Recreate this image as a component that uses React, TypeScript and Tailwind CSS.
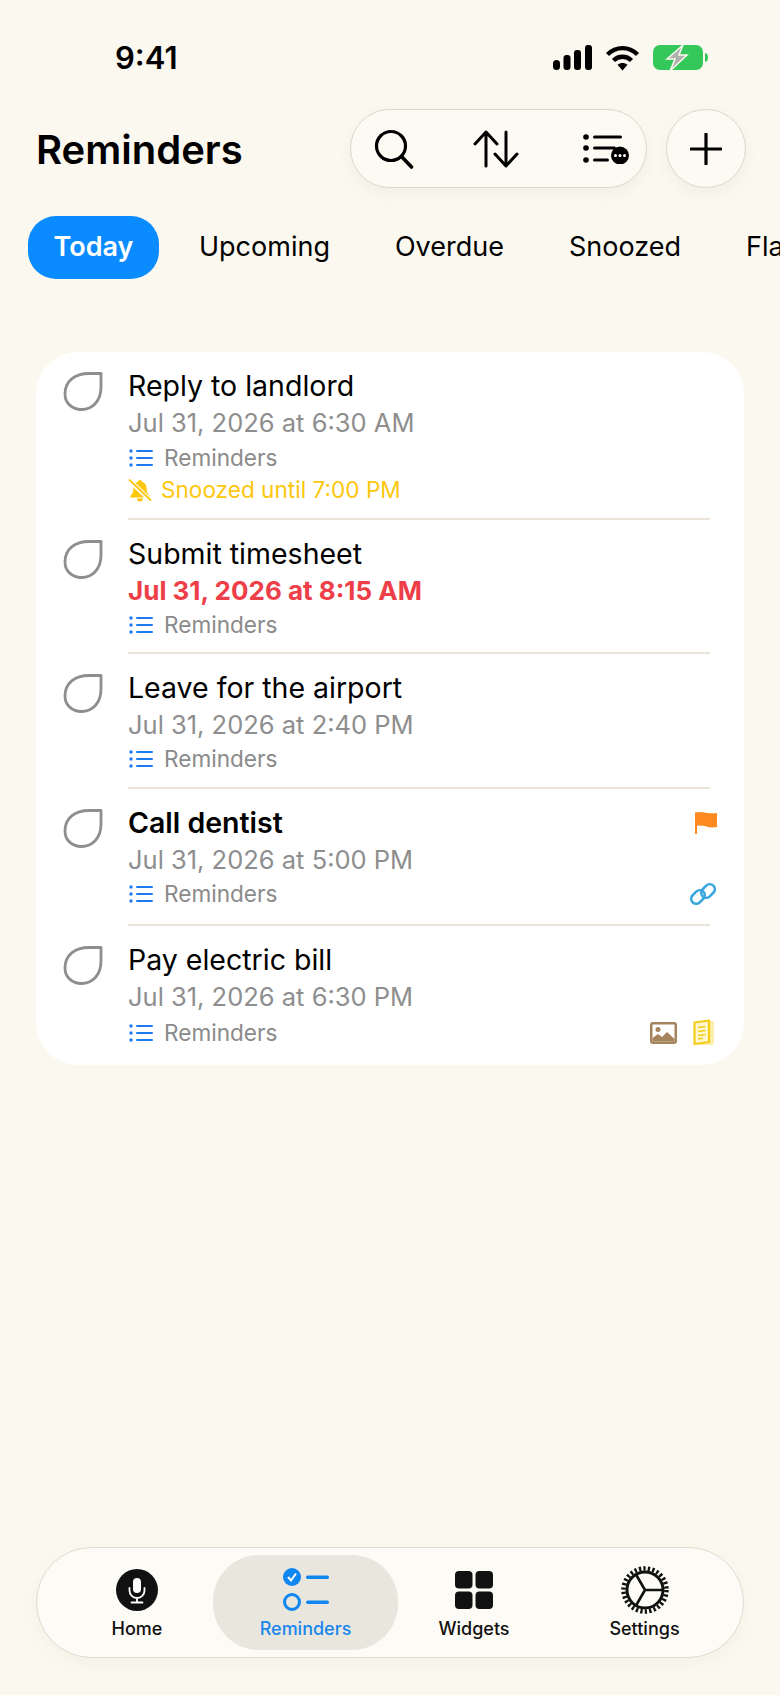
const font = { fontFamily: "Inter, 'Noto Sans', sans-serif" }

function Signal() {
  return (
    <svg width="39" height="25" viewBox="0 0 39 25" fill="#000">
      <rect x="0" y="15" width="7" height="10" rx="3.500" />
      <rect x="10.500" y="10" width="7" height="15" rx="3" />
      <rect x="21" y="5" width="7" height="20" rx="3" />
      <rect x="32" y="0" width="7" height="25" rx="3" />
    </svg>
  )
}

function Wifi() {
  return (
    <svg width="35" height="26" viewBox="0 0 34 26" fill="none" stroke="#000" strokeWidth="4.400">
      <path d="M2 9.500C10.500 1 23.500 1 32 9.500" />
      <path d="M8 15.500C13 10.500 21 10.500 26 15.500" />
      <path d="M17 25.500L12 19.800C15 17.400 19 17.400 22 19.800Z" fill="#000" stroke="none" />
    </svg>
  )
}

function Battery() {
  return (
    <svg width="55" height="27" viewBox="0 0 55 27">
      <rect x="0" y="1" width="50" height="25" rx="7" fill="#34c759" />
      <path d="M52 9c2 .5 3 2 3 4.500s-1 4-3 4.500z" fill="#34c759" />
      <path d="M30 1L14 15h8l-5 12 17-16h-8z" fill="#aeb0ab" stroke="#fbf8ef" strokeWidth="1.500" />
    </svg>
  )
}

function Drop() {
  return (
    <svg width="40" height="40" viewBox="0 0 40 40" fill="none" className="shrink-0">
      <path d="M38 2.500C38 2.500 36 2.500 26 2.500C12 2.500 2 10 2 23C2 32 9 38.500 18.500 38.500C29.500 38.500 38 30 38 16C38 9 38 2.500 38 2.500Z" stroke="#8e8e8e" strokeWidth="2.800" strokeLinejoin="round" />
    </svg>
  )
}

function ListIcon() {
  return (
    <svg width="24" height="18" viewBox="0 0 24 18" fill="#1d7bf0" className="ml-[1px] shrink-0">
      <circle cx="2" cy="2" r="1.700" />
      <circle cx="2" cy="9" r="1.700" />
      <circle cx="2" cy="16" r="1.700" />
      <rect x="7" y="1" width="17" height="2" rx="1" />
      <rect x="7" y="8" width="17" height="2" rx="1" />
      <rect x="7" y="15" width="17" height="2" rx="1" />
    </svg>
  )
}

function BellOff() {
  return (
    <svg width="24" height="24" viewBox="0 0 24 24" className="shrink-0">
      <path d="M12 2c-1.200 0-2 .8-2 1.800C6.800 4.800 5.300 7.400 5.300 11c0 3.500-1 5-3 7v1.500h19.400V18c-2-2-3-3.500-3-7 0-3.600-1.500-6.200-4.700-7.200C14 2.800 13.200 2 12 2z" fill="#fdc70c" />
      <path d="M9 20.500a3 3 0 0 0 6 0z" fill="#fdc70c" />
      <path d="M1 2l22 21" stroke="#fff" strokeWidth="4.500" />
      <path d="M1 1.500l22 21" stroke="#fdc70c" strokeWidth="1.800" />
    </svg>
  )
}

function Row({
  title,
  bold,
  date,
  dateClass,
  snoozed,
  divider,
  pad,
  listMargin,
  flag,
  link,
  attach,
}: {
  title: string
  bold?: boolean
  date: string
  dateClass?: string
  snoozed?: boolean
  divider?: boolean
  pad: string
  listMargin?: string
  flag?: boolean
  link?: boolean
  attach?: boolean
}) {
  return (
    <div className="flex pl-[27px] pt-[19px]">
      <div className="mr-[25px]">
        <Drop />
      </div>
      <div className={`relative w-[582px] ${divider ? "border-b-2 border-[#ebe4d8]" : ""}`}>
        <div className={`h-[30px] text-[28.500px] leading-[30px] text-black ${bold ? "font-semibold" : ""}`}>{title}</div>
        <div className={`mt-[7px] h-[30px] leading-[30px] ${dateClass ?? "text-[25.500px] text-[#8e8e8e]"}`}>{date}</div>
        <div className={`${listMargin ?? "mt-[6px]"} flex h-[26px] items-center`}>
          <ListIcon />
          <span className="ml-[11px] text-[22.600px] text-[#8a8a8a]">Reminders</span>
        </div>
        {snoozed && (
          <div className="mt-[6px] flex h-[26px] items-center">
            <BellOff />
            <span className="ml-[9px] text-[22.600px] text-[#fdc70c]">Snoozed until 7:00 PM</span>
          </div>
        )}
        <div className={pad} />
        {flag && (
          <svg width="24" height="24" viewBox="0 0 24 24" className="absolute right-[-8px] top-[3px]">
            <path d="M1 1.500C8 -.5 14 3.500 23 2V16C15 18 9 13 3 15V23H1Z" fill="#ff8a1f" />
          </svg>
        )}
        {link && (
          <svg width="26" height="26" viewBox="0 0 26 26" fill="none" stroke="#38a6e0" strokeWidth="2.600" className="absolute right-[-6px] top-[73px]">
            <rect x="0.500" y="11" width="15" height="10" rx="5" transform="rotate(-45 8 16)" />
            <rect x="10.500" y="5" width="15" height="10" rx="5" transform="rotate(-45 18 10)" />
          </svg>
        )}
        {attach && (
          <div className="absolute right-[-4px] top-[74px] flex items-center gap-[15px]">
            <svg width="27" height="22" viewBox="0 0 27 22">
              <rect width="27" height="22" rx="3" fill="#a5835c" />
              <rect x="2.500" y="2.500" width="22" height="17" fill="#fff" />
              <circle cx="8" cy="7.500" r="2.500" fill="#a5835c" />
              <path d="M2.500 19.500V16L8 12l4 3 5-5 7.500 7v2.500z" fill="#a5835c" />
            </svg>
            <svg width="22" height="27" viewBox="0 0 22 27" fill="none">
              <rect x="5" y="2" width="17" height="24" rx="2" fill="#fbeea8" />
              <path d="M2.500 3.500L17 1.500V23L2.500 25Z" fill="#fff7cf" stroke="#f5cd17" strokeWidth="2.200" strokeLinejoin="round" />
              <path d="M6 8.500L13.500 7.500M6 12.500L13.500 11.500M6 16.500L13.500 15.500M6 20L11 19.300" stroke="#f5cd17" strokeWidth="1.500" />
            </svg>
          </div>
        )}
      </div>
    </div>
  )
}

function Gear() {
  return (
    <svg width="48" height="48" viewBox="0 0 48 48" fill="none" stroke="#111">
      <circle cx="24" cy="24" r="21.500" strokeWidth="4.500" strokeDasharray="2.300 2.200" />
      <circle cx="24" cy="24" r="18" strokeWidth="3" />
      <path d="M24 24H42M24 24L15 8.500M24 24L15 39.500" strokeWidth="2.600" />
    </svg>
  )
}

function NavItem({ label, children, active, className }: { label: string; children: React.ReactNode; active?: boolean; className?: string }) {
  return (
    <div className={`flex h-[95px] flex-col items-center justify-center rounded-[46px] ${active ? "bg-[#e9e6de]" : ""} ${className ?? ""}`}>
      <div className="flex h-[46px] items-center justify-center">{children}</div>
      <div className={`mt-[6px] text-[18px] leading-[20px] font-medium ${active ? "text-[#1a87ee]" : "text-[#111]"}`}>{label}</div>
    </div>
  )
}

export default function App() {
  return (
    <div style={font} className="flex h-[1695px] w-[780px] flex-col overflow-hidden bg-[#fbf8ef]">
      <div className="flex h-[109px] items-start justify-between pt-[40px] pl-[115px] pr-[72px]">
        <span className="text-[31px] leading-[36px] font-semibold text-black">9:41</span>
        <div className="flex items-center gap-[13px] pt-[4px]">
          <Signal />
          <Wifi />
          <Battery />
        </div>
      </div>

      <div className="flex items-center pl-[36px]">
        <h1 className="w-[314px] pt-[2px] text-[40px] font-semibold text-black">Reminders</h1>
        <div className="flex h-[79px] w-[297px] items-center justify-between rounded-[40px] border border-[#dcd8cc] bg-[#fcfaf3] pl-[23px] pr-[17px] shadow-[0_6px_14px_rgba(120,110,90,0.06)]">
          <svg width="40" height="40" viewBox="0 0 40 40" fill="none" stroke="#000" strokeWidth="3.200" strokeLinecap="round">
            <circle cx="17" cy="17" r="14.500" />
            <path d="M27.500 27.500L37.500 38" strokeWidth="3.600" />
          </svg>
          <svg width="46" height="38" viewBox="0 0 46 38" fill="none" stroke="#000" strokeWidth="3" strokeLinecap="round" strokeLinejoin="round" className="mr-[6px]">
            <path d="M13 36V2M2 14L13 2l11 12" />
            <path d="M33 2v34M22 24l11 12 11-12" />
          </svg>
          <svg width="46" height="30" viewBox="0 0 46 30">
            <circle cx="3" cy="3" r="2.800" />
            <circle cx="3" cy="14" r="2.800" />
            <circle cx="3" cy="26" r="2.800" />
            <rect x="10" y="1.500" width="29" height="3" rx="1.500" />
            <rect x="10" y="12.500" width="23" height="3" rx="1.500" />
            <rect x="10" y="24.500" width="16" height="3" rx="1.500" />
            <circle cx="37" cy="21.500" r="9" />
            <circle cx="32.500" cy="21.500" r="1.500" fill="#fff" />
            <circle cx="37" cy="21.500" r="1.500" fill="#fff" />
            <circle cx="41.500" cy="21.500" r="1.500" fill="#fff" />
          </svg>
        </div>
        <div className="ml-[19px] flex h-[79px] w-[80px] shrink-0 items-center justify-center rounded-full border border-[#dcd8cc] bg-[#fcfaf3] shadow-[0_6px_14px_rgba(120,110,90,0.06)]">
          <svg width="32" height="32" viewBox="0 0 32 32" stroke="#000" strokeWidth="3.200" strokeLinecap="round">
            <path d="M16 1v30M1 16h30" />
          </svg>
        </div>
      </div>

      <div className="mt-[28px] flex h-[63px] items-center overflow-hidden whitespace-nowrap pl-[28px] text-[27px] text-black">
        <div className="flex h-[63px] w-[131px] shrink-0 items-center justify-center rounded-[28px] bg-[#0a8bff] font-semibold text-white">Today</div>
        <span className="ml-[40px] shrink-0">Upcoming</span>
        <span className="ml-[65px] shrink-0">Overdue</span>
        <span className="ml-[65px] shrink-0">Snoozed</span>
        <span className="ml-[65px] shrink-0">Flagged</span>
      </div>

      <div className="mx-[36px] mt-[73px] w-[708px] rounded-[42px] bg-white">
        <Row title="Reply to landlord" date="Jul 31, 2026 at 6:30 AM" snoozed divider listMargin="mt-[7px]" pad="h-[15px]" />
        <Row title="Submit timesheet" date="Jul 31, 2026 at 8:15 AM" dateClass="text-[26px] font-bold text-[#ee3f49]" divider pad="h-[14px]" />
        <Row title="Leave for the airport" date="Jul 31, 2026 at 2:40 PM" divider pad="h-[15px]" />
        <Row title="Call dentist" bold date="Jul 31, 2026 at 5:00 PM" divider flag link pad="h-[17px]" />
        <Row title="Pay electric bill" date="Jul 31, 2026 at 6:30 PM" attach listMargin="mt-[8px]" pad="h-[19px]" />
      </div>

      <div className="mx-[36px] mt-auto mb-[37px] grid h-[111px] w-[708px] grid-cols-[176px_185px_152px_1fr] items-center rounded-[56px] border border-[#dfdbd0] bg-[#fdfbf5] shadow-[0_6px_16px_rgba(120,110,90,0.05)]">
        <NavItem label="Home" className="pl-[24px]">
          <svg width="42" height="42" viewBox="0 0 42 42" fill="none">
            <circle cx="21" cy="21" r="21" fill="#111" />
            <rect x="17" y="9" width="8" height="15" rx="4" fill="#fff" />
            <path d="M13.500 19v2.500a7.500 7.500 0 0 0 15 0V19M21 29v4M15.500 33.500h11" stroke="#fff" strokeWidth="1.800" strokeLinecap="round" />
          </svg>
        </NavItem>
        <NavItem label="Reminders" active>
          <svg width="46" height="44" viewBox="0 0 46 44" fill="none">
            <circle cx="9" cy="9" r="9" fill="#0f86f0" />
            <path d="M5 9l3 3.500L13 5.500" stroke="#fff" strokeWidth="2" />
            <circle cx="9" cy="34" r="7.500" stroke="#0f86f0" strokeWidth="3" />
            <rect x="23" y="7.500" width="23" height="3.500" rx="1.750" fill="#0f86f0" />
            <rect x="23" y="32.500" width="23" height="3.500" rx="1.750" fill="#0f86f0" />
          </svg>
        </NavItem>
        <NavItem label="Widgets">
          <svg width="38" height="38" viewBox="0 0 38 38" fill="#111">
            <rect width="17.500" height="17.500" rx="4" />
            <rect x="20.500" width="17.500" height="17.500" rx="4" />
            <rect y="20.500" width="17.500" height="17.500" rx="4" />
            <rect x="20.500" y="20.500" width="17.500" height="17.500" rx="4" />
          </svg>
        </NavItem>
        <NavItem label="Settings" className="pr-[4px]">
          <Gear />
        </NavItem>
      </div>
    </div>
  )
}
